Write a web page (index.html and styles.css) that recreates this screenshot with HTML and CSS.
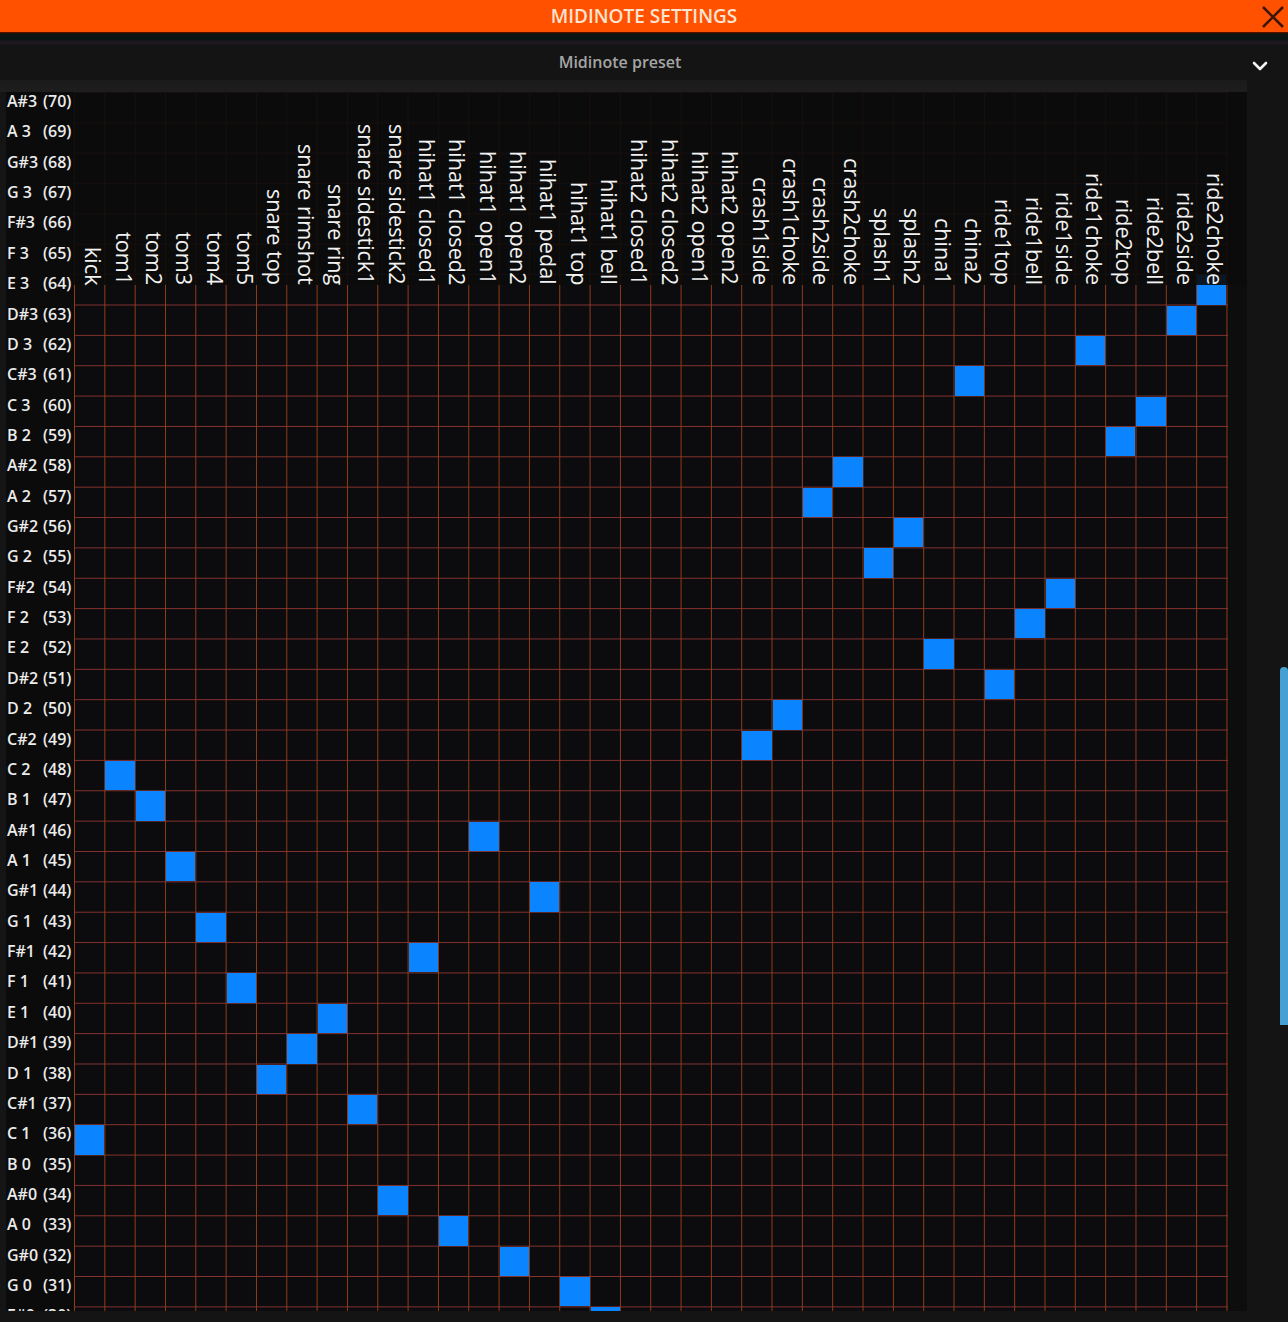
FILE: index.html
```html
<!DOCTYPE html>
<html>
<head>
<meta charset="utf-8">
<title>Midinote settings</title>
<link rel="stylesheet" href="styles.css">
</head>
<body>
<div class="app">
  <div class="titlebar">
    <div></div>
    <div class="title">MIDINOTE SETTINGS</div>
    <div class="close-wrap">
      <svg class="close" width="24" height="24" viewBox="0 0 24 24"><path d="M2 2 L22 22 M22 2 L2 22" stroke="#3b1609" stroke-width="2.6" fill="none"/></svg>
    </div>
  </div>
  <div class="divider"></div>
  <div class="preset">
    <div class="preset-label">Midinote preset</div>
    <div class="chev-wrap">
      <svg width="16" height="12" viewBox="0 0 16 12"><polyline points="2,3 8,9 14,3" stroke="#f4f4f4" stroke-width="2.6" fill="none" stroke-linecap="round" stroke-linejoin="round"/></svg>
    </div>
  </div>
  <div class="main">
    <div class="viewport">
      <div class="band"></div>
      <div class="area">
        <div class="edge"></div>
        <div class="labels">
          <div class="label"><span class="note">A#3</span><span>(70)</span></div>
          <div class="label"><span class="note">A 3</span><span>(69)</span></div>
          <div class="label"><span class="note">G#3</span><span>(68)</span></div>
          <div class="label"><span class="note">G 3</span><span>(67)</span></div>
          <div class="label"><span class="note">F#3</span><span>(66)</span></div>
          <div class="label"><span class="note">F 3</span><span>(65)</span></div>
          <div class="label"><span class="note">E 3</span><span>(64)</span></div>
          <div class="label"><span class="note">D#3</span><span>(63)</span></div>
          <div class="label"><span class="note">D 3</span><span>(62)</span></div>
          <div class="label"><span class="note">C#3</span><span>(61)</span></div>
          <div class="label"><span class="note">C 3</span><span>(60)</span></div>
          <div class="label"><span class="note">B 2</span><span>(59)</span></div>
          <div class="label"><span class="note">A#2</span><span>(58)</span></div>
          <div class="label"><span class="note">A 2</span><span>(57)</span></div>
          <div class="label"><span class="note">G#2</span><span>(56)</span></div>
          <div class="label"><span class="note">G 2</span><span>(55)</span></div>
          <div class="label"><span class="note">F#2</span><span>(54)</span></div>
          <div class="label"><span class="note">F 2</span><span>(53)</span></div>
          <div class="label"><span class="note">E 2</span><span>(52)</span></div>
          <div class="label"><span class="note">D#2</span><span>(51)</span></div>
          <div class="label"><span class="note">D 2</span><span>(50)</span></div>
          <div class="label"><span class="note">C#2</span><span>(49)</span></div>
          <div class="label"><span class="note">C 2</span><span>(48)</span></div>
          <div class="label"><span class="note">B 1</span><span>(47)</span></div>
          <div class="label"><span class="note">A#1</span><span>(46)</span></div>
          <div class="label"><span class="note">A 1</span><span>(45)</span></div>
          <div class="label"><span class="note">G#1</span><span>(44)</span></div>
          <div class="label"><span class="note">G 1</span><span>(43)</span></div>
          <div class="label"><span class="note">F#1</span><span>(42)</span></div>
          <div class="label"><span class="note">F 1</span><span>(41)</span></div>
          <div class="label"><span class="note">E 1</span><span>(40)</span></div>
          <div class="label"><span class="note">D#1</span><span>(39)</span></div>
          <div class="label"><span class="note">D 1</span><span>(38)</span></div>
          <div class="label"><span class="note">C#1</span><span>(37)</span></div>
          <div class="label"><span class="note">C 1</span><span>(36)</span></div>
          <div class="label"><span class="note">B 0</span><span>(35)</span></div>
          <div class="label"><span class="note">A#0</span><span>(34)</span></div>
          <div class="label"><span class="note">A 0</span><span>(33)</span></div>
          <div class="label"><span class="note">G#0</span><span>(32)</span></div>
          <div class="label"><span class="note">G 0</span><span>(31)</span></div>
          <div class="label"><span class="note">F#0</span><span>(30)</span></div>
        </div>
        <div class="gridwrap">
          <div class="grid">
            <i class="on" style="grid-area: 7 / 38"></i>
            <i class="on" style="grid-area: 8 / 37"></i>
            <i class="on" style="grid-area: 9 / 34"></i>
            <i class="on" style="grid-area: 10 / 30"></i>
            <i class="on" style="grid-area: 11 / 36"></i>
            <i class="on" style="grid-area: 12 / 35"></i>
            <i class="on" style="grid-area: 13 / 26"></i>
            <i class="on" style="grid-area: 14 / 25"></i>
            <i class="on" style="grid-area: 15 / 28"></i>
            <i class="on" style="grid-area: 16 / 27"></i>
            <i class="on" style="grid-area: 17 / 33"></i>
            <i class="on" style="grid-area: 18 / 32"></i>
            <i class="on" style="grid-area: 19 / 29"></i>
            <i class="on" style="grid-area: 20 / 31"></i>
            <i class="on" style="grid-area: 21 / 24"></i>
            <i class="on" style="grid-area: 22 / 23"></i>
            <i class="on" style="grid-area: 23 / 2"></i>
            <i class="on" style="grid-area: 24 / 3"></i>
            <i class="on" style="grid-area: 25 / 14"></i>
            <i class="on" style="grid-area: 26 / 4"></i>
            <i class="on" style="grid-area: 27 / 16"></i>
            <i class="on" style="grid-area: 28 / 5"></i>
            <i class="on" style="grid-area: 29 / 12"></i>
            <i class="on" style="grid-area: 30 / 6"></i>
            <i class="on" style="grid-area: 31 / 9"></i>
            <i class="on" style="grid-area: 32 / 8"></i>
            <i class="on" style="grid-area: 33 / 7"></i>
            <i class="on" style="grid-area: 34 / 10"></i>
            <i class="on" style="grid-area: 35 / 1"></i>
            <i class="on" style="grid-area: 37 / 11"></i>
            <i class="on" style="grid-area: 38 / 13"></i>
            <i class="on" style="grid-area: 39 / 15"></i>
            <i class="on" style="grid-area: 40 / 17"></i>
            <i class="on" style="grid-area: 41 / 18"></i>
          </div>
          <div class="heads">
            <div class="h">kick</div>
            <div class="h">tom1</div>
            <div class="h">tom2</div>
            <div class="h">tom3</div>
            <div class="h">tom4</div>
            <div class="h">tom5</div>
            <div class="h">snare top</div>
            <div class="h">snare rimshot</div>
            <div class="h">snare ring</div>
            <div class="h">snare sidestick1</div>
            <div class="h">snare sidestick2</div>
            <div class="h">hihat1 closed1</div>
            <div class="h">hihat1 closed2</div>
            <div class="h">hihat1 open1</div>
            <div class="h">hihat1 open2</div>
            <div class="h">hihat1 pedal</div>
            <div class="h">hihat1 top</div>
            <div class="h">hihat1 bell</div>
            <div class="h">hihat2 closed1</div>
            <div class="h">hihat2 closed2</div>
            <div class="h">hihat2 open1</div>
            <div class="h">hihat2 open2</div>
            <div class="h">crash1side</div>
            <div class="h">crash1choke</div>
            <div class="h">crash2side</div>
            <div class="h">crash2choke</div>
            <div class="h">splash1</div>
            <div class="h">splash2</div>
            <div class="h">china1</div>
            <div class="h">china2</div>
            <div class="h">ride1top</div>
            <div class="h">ride1bell</div>
            <div class="h">ride1side</div>
            <div class="h">ride1choke</div>
            <div class="h">ride2top</div>
            <div class="h">ride2bell</div>
            <div class="h">ride2side</div>
            <div class="h">ride2choke</div>
          </div>
        </div>
        <div class="rest"></div>
      </div>
    </div>
    <div class="scrollcol">
      <div class="thumb"></div>
    </div>
  </div>
  <div class="footer"></div>
</div>
</body>
</html>
```

FILE: styles.css
```css
* { box-sizing: border-box; }
html, body { margin: 0; padding: 0; }
body {
  width: 1288px;
  height: 1322px;
  overflow: hidden;
  background: #141414;
  font-family: "Open Sans", "DejaVu Sans", sans-serif;
}
.app {
  display: flex;
  flex-direction: column;
  width: 1288px;
  height: 1322px;
  overflow: hidden;
}
.titlebar {
  flex: none;
  height: 32px;
  background: #ff5100;
  display: grid;
  grid-template-columns: 1fr auto 1fr;
  align-items: center;
}
.title {
  color: #fbe4cf;
  font-size: 19px;
  font-weight: 600;
  line-height: 32px;
}
.close-wrap {
  justify-self: end;
  display: flex;
  margin-right: 3px;
  padding-top: 1px;
}
.divider {
  flex: none;
  height: 13px;
  background: linear-gradient(to bottom, #6a1802 0, #3a0c02 1px, #0b1513 2px, #0b1513 8px, #1e1720 9px, #1e1720 12px, #141414 13px);
}
.preset {
  flex: none;
  height: 35px;
  display: flex;
  align-items: center;
  background: #141414;
}
.preset-label {
  width: 1240px;
  text-align: center;
  color: #a5a5a5;
  font-size: 16px;
  font-weight: 600;
  padding-bottom: 2px;
}
.chev-wrap {
  display: flex;
  margin-left: 12px;
  padding-top: 7px;
}
.main {
  flex: none;
  height: 1231px;
  display: flex;
}
.viewport {
  width: 1247px;
  display: flex;
  flex-direction: column;
  background: #0b0b0b;
}
.band {
  flex: none;
  height: 12px;
  background: linear-gradient(to bottom, #1a1a1a, #1e1e1e);
}
.area {
  flex: none;
  height: 1219px;
  display: flex;
  position: relative;
  z-index: 1;
  clip-path: inset(-6px 0 0 0);
}
.edge {
  flex: none;
  width: 6px;
  background: #151515;
}
.labels {
  flex: none;
  width: 68px;
  padding-left: 1px;
  background: #0b0b0b;
}
.label {
  height: 30.36px;
  display: flex;
  font-size: 16px;
  font-weight: 600;
  line-height: 18px;
  color: #ececec;
  white-space: nowrap;
}
.note {
  width: 36px;
  flex: none;
}
.gridwrap {
  flex: none;
  width: 1154px;
  position: relative;
}
.grid {
  display: grid;
  grid-template-columns: repeat(38, 30.342px);
  grid-auto-rows: 30.36px;
  width: 1154px;
  height: 1246px;
  background-color: #0c0b0d;
  background-image:
    linear-gradient(to right, #923d18 1px, transparent 1px),
    linear-gradient(to bottom, #84322e 1px, transparent 1px);
  background-size: 30.342px 100%, 100% 30.36px;
}
.on {
  display: block;
  background: #0a84ff;
  margin: 1px 0 0 1px;
}
.heads {
  position: absolute;
  left: 0;
  top: 0;
  width: 1173px;
  height: 193px;
  display: flex;
  background: rgba(11, 11, 11, 0.9);
}
.h {
  flex: none;
  width: 30.342px;
  height: 193px;
  writing-mode: vertical-rl;
  text-align: end;
  white-space: nowrap;
  color: #f2f2f2;
  font-size: 21.6px;
  line-height: 22px;
}
.rest {
  flex: 1;
  background: #0d0d0d;
}
.scrollcol {
  flex: 1;
  background: #141414;
  display: flex;
  flex-direction: column;
  align-items: flex-end;
  padding-top: 587px;
}
.thumb {
  width: 8px;
  height: 358px;
  background: #46a0d4;
  border-radius: 4px 4px 0 0;
}
.footer {
  flex: 1;
  background: #141414;
}
```
